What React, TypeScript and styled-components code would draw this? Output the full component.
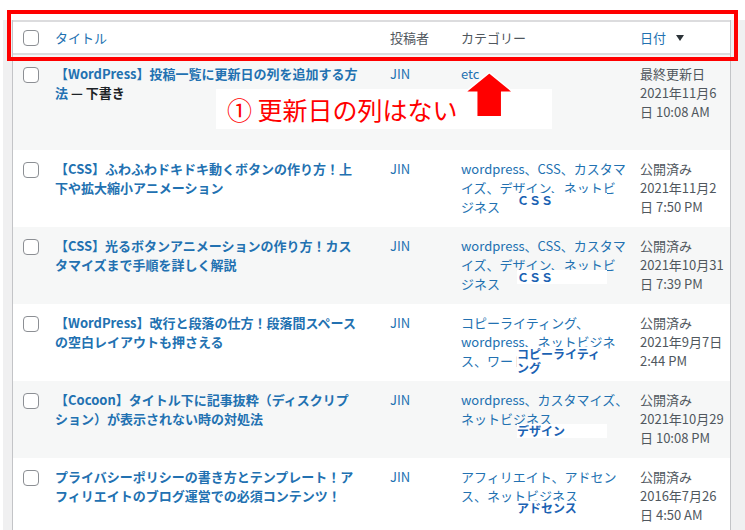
import React from "react";
import styled, { createGlobalStyle } from "styled-components";

const GlobalStyle = createGlobalStyle`
  html, body { margin: 0; padding: 0; background: #fff; }
  body { font-family: "Noto Sans CJK JP", "Noto Sans", sans-serif; }
`;

const cols = "42px 335px 71px 179px 1fr";

const Page = styled.div`
  position: relative;
  width: 745px;
  height: 530px;
  overflow: hidden;
  padding-top: 20px;
  box-sizing: border-box;
  background: #fff;
`;

const Frame = styled.div`
  margin-left: 3px;
  padding: 0 14px 0 9px;
  background: #f0f0f1;
  min-height: 510px;
`;

const Table = styled.div`
  background: #fff;
  border-left: 1px solid #c3c4c7;
  border-right: 1px solid #c3c4c7;
  min-height: 510px;
`;

const HeadRow = styled.div`
  display: grid;
  grid-template-columns: ${cols};
  align-items: center;
  height: 35px;
  box-sizing: border-box;
  border-top: 2px solid #dcdcde;
  border-bottom: 2px solid #dcdcde;
  font-size: 13px;
  background: #fff;
`;

const HeadCell = styled.div<{ $link?: boolean }>`
  display: flex;
  align-items: center;
  color: ${(p) => (p.$link ? "#2271b1" : "#50575e")};
  line-height: 19px;
`;

const SortArrow = styled.span`
  display: inline-block;
  margin-left: 10px;
  width: 0;
  height: 0;
  border-left: 4px solid transparent;
  border-right: 4px solid transparent;
  border-top: 6px solid #2c3338;
`;

const Check = styled.span<{ $inRow?: boolean }>`
  display: block;
  width: 16px;
  height: 16px;
  margin-left: 10px;
  margin-top: ${(p) => (p.$inRow ? "3px" : "0")};
  box-sizing: border-box;
  border: 1px solid #8c8f94;
  border-radius: 4px;
  background: #fff;
`;

const Row = styled.div<{ $striped: boolean; $tall?: boolean }>`
  display: grid;
  grid-template-columns: ${cols};
  align-items: start;
  padding: 9px 0 11px;
  box-sizing: border-box;
  min-height: ${(p) => (p.$tall ? "95px" : "77px")};
  background: ${(p) => (p.$striped ? "#f6f7f7" : "#fff")};
  font-size: 13px;
  line-height: 19px;
`;

const Line = styled.span`
  display: block;
  white-space: nowrap;
`;

const Title = styled.div`
  font-weight: 600;
  color: #2271b1;
`;

const State = styled.span`
  color: #1d2327;
`;

const Author = styled.div`
  color: #2271b1;
`;

const Cats = styled.div`
  position: relative;
  color: #2271b1;
`;

const Note = styled.div`
  position: absolute;
  left: 56px;
  top: 34px;
  width: 90px;
  background: #fff;
  color: #1b62b3;
  font-size: 12px;
  font-weight: 700;
  line-height: 14px;
`;

const DateCell = styled.div`
  color: #50575e;
`;

const RedFrame = styled.div`
  position: absolute;
  left: 7px;
  top: 10px;
  width: 731px;
  height: 51px;
  box-sizing: border-box;
  border: 4px solid #ff0000;
  pointer-events: none;
`;

const Callout = styled.div`
  position: absolute;
  left: 216px;
  top: 89px;
  width: 336px;
  height: 40px;
  box-sizing: border-box;
  padding-left: 11px;
  background: #fff;
  color: #ff0000;
  font-size: 25px;
  line-height: 40px;
  white-space: nowrap;
`;

const ArrowSvg = styled.svg`
  position: absolute;
  left: 460px;
  top: 70px;
`;

type Post = {
  title: string[];
  state?: string;
  cats: string[];
  date: string[];
  note?: string;
};

const posts: Post[] = [
  {
    title: ["【WordPress】投稿一覧に更新日の列を追加する方", "法"],
    state: " — 下書き",
    cats: ["etc"],
    date: ["最終更新日", "2021年11月6", "日 10:08 AM"],
  },
  {
    title: ["【CSS】ふわふわドキドキ動くボタンの作り方！上", "下や拡大縮小アニメーション"],
    cats: ["wordpress、CSS、カスタマ", "イズ、デザイン、ネットビ", "ジネス"],
    date: ["公開済み", "2021年11月2", "日 7:50 PM"],
    note: "ＣＳＳ",
  },
  {
    title: ["【CSS】光るボタンアニメーションの作り方！カス", "タマイズまで手順を詳しく解説"],
    cats: ["wordpress、CSS、カスタマ", "イズ、デザイン、ネットビ", "ジネス"],
    date: ["公開済み", "2021年10月31", "日 7:39 PM"],
    note: "ＣＳＳ",
  },
  {
    title: ["【WordPress】改行と段落の仕方！段落間スペース", "の空白レイアウトも押さえる"],
    cats: ["コピーライティング、", "wordpress、ネットビジネ", "ス、ワードプレス"],
    date: ["公開済み", "2021年9月7日", "2:44 PM"],
    note: "コピーライティング",
  },
  {
    title: ["【Cocoon】タイトル下に記事抜粋（ディスクリプ", "ション）が表示されない時の対処法"],
    cats: ["wordpress、カスタマイズ、", "ネットビジネス"],
    date: ["公開済み", "2021年10月29", "日 10:08 PM"],
    note: "デザイン",
  },
  {
    title: ["プライバシーポリシーの書き方とテンプレート！ア", "フィリエイトのブログ運営での必須コンテンツ！"],
    cats: ["アフィリエイト、アドセン", "ス、ネットビジネス"],
    date: ["公開済み", "2016年7月26", "日 4:50 AM"],
    note: "アドセンス",
  },
];

export default function App() {
  return (
    <>
      <GlobalStyle />
      <Page>
        <Frame>
          <Table>
            <HeadRow>
              <HeadCell>
                <Check />
              </HeadCell>
              <HeadCell $link>タイトル</HeadCell>
              <HeadCell>投稿者</HeadCell>
              <HeadCell>カテゴリー</HeadCell>
              <HeadCell $link>
                日付
                <SortArrow />
              </HeadCell>
            </HeadRow>
            {posts.map((p, i) => (
              <Row key={i} $striped={i % 2 === 0} $tall={i === 0}>
                <Check $inRow />
                <Title>
                  {p.title.map((t, j) => (
                    <Line key={j}>
                      {t}
                      {j === p.title.length - 1 && p.state && <State>{p.state}</State>}
                    </Line>
                  ))}
                </Title>
                <Author>JIN</Author>
                <Cats>
                  {p.cats.map((c, j) => (
                    <Line key={j}>{c}</Line>
                  ))}
                  {p.note && <Note>{p.note}</Note>}
                </Cats>
                <DateCell>
                  {p.date.map((d, j) => (
                    <Line key={j}>{d}</Line>
                  ))}
                </DateCell>
              </Row>
            ))}
          </Table>
        </Frame>
        <RedFrame />
        <Callout>① 更新日の列はない</Callout>
        <ArrowSvg width="56" height="50" viewBox="0 0 56 50">
          <polygon
            points="29.3,2.7 53.3,22.3 41.7,22.3 41.7,46.7 16.7,46.7 16.7,22.3 5,22.3"
            fill="#ff0000"
            stroke="#ffffff"
            strokeWidth="1.5"
            strokeLinejoin="miter"
          />
        </ArrowSvg>
      </Page>
    </>
  );
}
